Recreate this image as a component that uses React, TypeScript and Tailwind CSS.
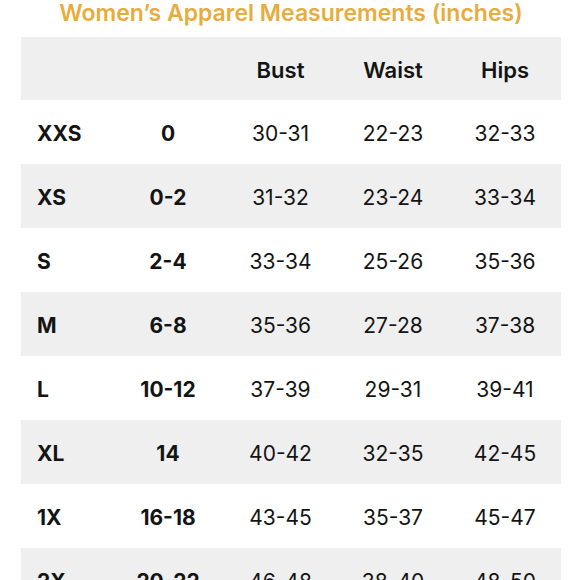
const rows = [
  { size: "XXS", num: "0", bust: "30-31", waist: "22-23", hips: "32-33" },
  { size: "XS", num: "0-2", bust: "31-32", waist: "23-24", hips: "33-34" },
  { size: "S", num: "2-4", bust: "33-34", waist: "25-26", hips: "35-36" },
  { size: "M", num: "6-8", bust: "35-36", waist: "27-28", hips: "37-38" },
  { size: "L", num: "10-12", bust: "37-39", waist: "29-31", hips: "39-41" },
  { size: "XL", num: "14", bust: "40-42", waist: "32-35", hips: "42-45" },
  { size: "1X", num: "16-18", bust: "43-45", waist: "35-37", hips: "45-47" },
  { size: "2X", num: "20-22", bust: "46-48", waist: "38-40", hips: "48-50" },
];

const gridClass = "grid grid-cols-[91px_112px_113px_112px_112px] items-center pt-[3px]";

export default function App() {
  return (
    <div className="w-[580px] h-[580px] overflow-hidden bg-white font-['Inter',sans-serif] text-[#141414]">
      <h1 className="h-[37px] leading-[26px] pl-[2px] text-center text-[23px] font-semibold text-[#e8ac3e]">
        Women’s Apparel Measurements (inches)
      </h1>
      <div className="ml-[21px] w-[540px]">
        <div className={`${gridClass} h-[63px] bg-[#efefef] text-[22px] font-semibold`}>
          <span />
          <span />
          <span className="text-center">Bust</span>
          <span className="text-center">Waist</span>
          <span className="text-center">Hips</span>
        </div>
        {rows.map((r, i) => (
          <div
            key={r.size}
            className={`${gridClass} h-16 text-[21px] ${i % 2 === 1 ? "bg-[#efefef]" : "bg-white"}`}
          >
            <span className="pl-4 font-bold">{r.size}</span>
            <span className="text-center font-bold">{r.num}</span>
            <span className="text-center">{r.bust}</span>
            <span className="text-center">{r.waist}</span>
            <span className="text-center">{r.hips}</span>
          </div>
        ))}
      </div>
    </div>
  );
}
